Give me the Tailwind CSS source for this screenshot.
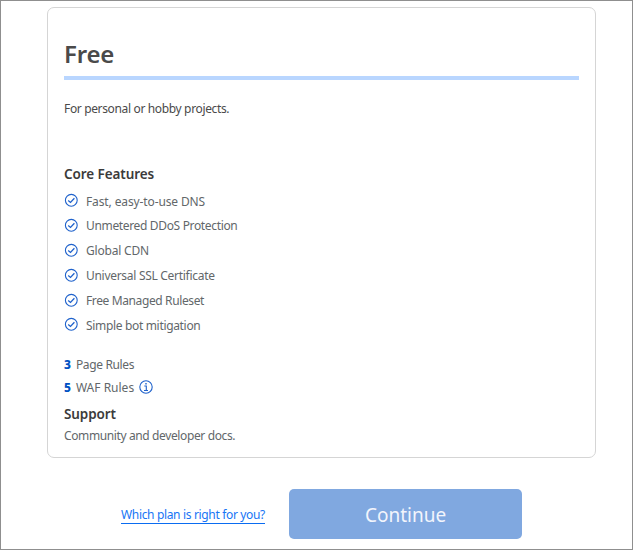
<!DOCTYPE html>
<html lang="en">
<head>
<meta charset="utf-8">
<title>Free plan</title>
<script src="https://cdn.jsdelivr.net/npm/@tailwindcss/browser@4"></script>
</head>
<body class="bg-white">
<svg class="hidden"><symbol id="check" viewBox="0 0 14 14"><circle cx="7.3" cy="7.3" r="5.9" fill="none" stroke="#1f62cc" stroke-width="1.1"/><path d="M4.2 7.4 6.5 9.4 10.4 5.2" fill="none" stroke="#1f62cc" stroke-width="1.3"/></symbol></svg>
<div class="flex h-[550px] w-[633px] flex-col overflow-hidden border border-[#8f8f8f] bg-white pt-[6px] pl-[46px] font-['Noto_Sans',sans-serif] text-[12px] whitespace-nowrap text-[#62676a]">
  <section class="flex h-[451px] w-[549px] shrink-0 flex-col rounded-[7px] border border-[#d5d5d5] px-4">
    <h1 class="mt-[27px] box-content h-[41px] border-b-4 border-[#b9d6ff] text-[24px] leading-[38px] font-semibold tracking-[-0.2px] text-[#4a4a4a]">Free</h1>
    <p class="mt-[19px] leading-5 tracking-[-0.35px] text-[#4a4a4a]">For personal or hobby projects.</p>
    <h2 class="mt-[45px] text-[13.5px] leading-5 font-semibold tracking-[-0.08px] text-[#3b3b3b]">Core Features</h2>
    <ul class="mt-[5px] flex flex-col leading-[24.8px]">
      <li class="flex h-[24.8px] items-center gap-2"><svg class="-mt-[2px] size-[14px]"><use href="#check"/></svg><span class="pt-[2px] tracking-[-0.12px]">Fast, easy-to-use DNS</span></li>
      <li class="flex h-[24.8px] items-center gap-2"><svg class="-mt-[2px] size-[14px]"><use href="#check"/></svg><span class="pt-px tracking-[-0.34px]">Unmetered DDoS Protection</span></li>
      <li class="flex h-[24.8px] items-center gap-2"><svg class="-mt-[2px] size-[14px]"><use href="#check"/></svg><span class="pt-px tracking-[-0.2px]">Global CDN</span></li>
      <li class="flex h-[24.8px] items-center gap-2"><svg class="-mt-[2px] size-[14px]"><use href="#check"/></svg><span class="pt-[2px] tracking-[-0.29px]">Universal SSL Certificate</span></li>
      <li class="flex h-[24.8px] items-center gap-2"><svg class="-mt-[2px] size-[14px]"><use href="#check"/></svg><span class="pt-[2px] tracking-[-0.38px]">Free Managed Ruleset</span></li>
      <li class="flex h-[24.8px] items-center gap-2"><svg class="-mt-[2px] size-[14px]"><use href="#check"/></svg><span class="pt-[2px] tracking-[-0.33px]">Simple bot mitigation</span></li>
    </ul>
    <div class="mt-[16px] flex h-[23px] items-center gap-[5px]"><b class="font-extrabold text-[#0051c3]">3</b><span class="tracking-[-0.36px]">Page Rules</span></div>
    <div class="flex h-[23px] items-center gap-[5px]"><b class="font-extrabold text-[#0051c3]">5</b><span>WAF Rules</span>
      <svg class="-mt-[2px] size-[14px]" viewBox="0 0 14 14" fill="none" stroke="#1f62cc"><circle cx="7" cy="7" r="6.2" stroke-width="1.1"/><path d="M5.3 6h2v4.2M5 10.5h4" stroke-width="1.1"/><path d="M6.3 3.8h1.4" stroke-width="1.4"/></svg>
    </div>
    <h2 class="mt-[4px] text-[13.5px] leading-5 font-semibold tracking-[-0.12px] text-[#3b3b3b]">Support</h2>
    <p class="mt-[2px] leading-5 tracking-[-0.38px]">Community and developer docs.</p>
  </section>
  <div class="mt-[31px] ml-[74px] flex h-[50px] items-center gap-6">
    <a class="mt-[2px] w-[144px] border-b border-[#0a6cf1] leading-[17px] tracking-[-0.34px] text-[#1775f5]">Which plan is right for you?</a>
    <button class="h-[50px] w-[233px] rounded-[5px] bg-[#80a8e0] pt-[2px] text-[19px] font-normal text-[#f2f5fc]">Continue</button>
  </div>
</div>
</body>
</html>
